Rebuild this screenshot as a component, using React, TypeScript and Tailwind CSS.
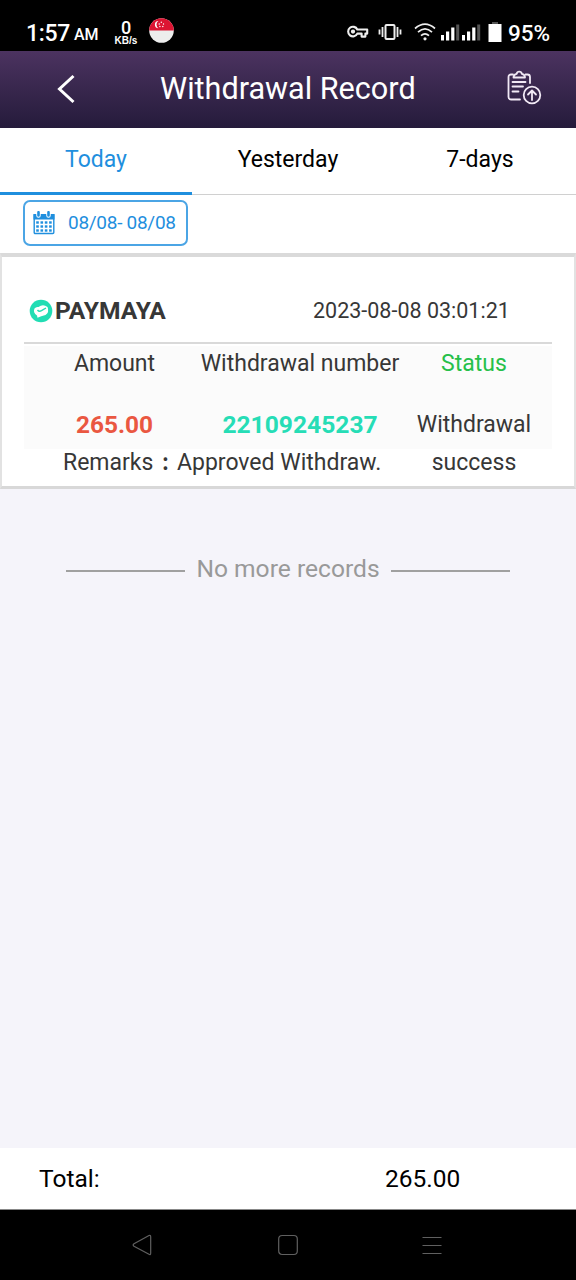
import React from "react";

const tabs = ["Today", "Yesterday", "7-days"];

const KeyIcon = () => (
  <svg width="22" height="14" viewBox="0 0 22 14" fill="none" stroke="#eee" strokeWidth="2.1">
    <path d="M10.3 4.5H20.2V8.6H18.4V11.6H14.6V8.6H10.3A4.8 4.8 0 1 1 10.3 4.5Z" strokeLinejoin="round" />
    <circle cx="6" cy="6.6" r="1.1" />
  </svg>
);

const VibrateIcon = () => (
  <svg width="24" height="16" viewBox="0 0 24 16" fill="none" stroke="#eee">
    <rect x="7.5" y="1" width="9" height="14" rx="1" strokeWidth="2" />
    <path d="M4.5 3v10M19.5 3v10" strokeWidth="1.8" />
    <path d="M1.5 5.5v5M22.5 5.5v5" strokeWidth="1.8" />
  </svg>
);

const WifiIcon = () => (
  <svg width="22" height="18" viewBox="0 0 22 18" fill="none" stroke="#eee" strokeWidth="1.7">
    <path d="M1 5.5Q11-3.2 21 5.5" />
    <path d="M4 9.2Q11 2.6 18 9.2" />
    <path d="M7 12.6Q11 9 15 12.6" />
    <circle cx="11" cy="15.8" r="1.6" fill="#eee" stroke="none" />
  </svg>
);

const SignalIcon = () => (
  <svg width="19" height="17" viewBox="0 0 19 17" fill="#fff">
    <rect x="0" y="11" width="3" height="5.5" />
    <rect x="5" y="7.5" width="3.2" height="9" />
    <rect x="10.2" y="3.5" width="3.2" height="13" />
    <rect x="15.2" y="0.5" width="3" height="16" fill="#555" />
  </svg>
);

const FlagIcon = () => (
  <svg width="25" height="25" viewBox="0 0 25 25">
    <circle cx="12.5" cy="12.5" r="12.3" fill="#ededed" />
    <path d="M.2 12.5a12.3 12.3 0 0 1 24.6 0Z" fill="#dc1432" />
    <path d="M9.5 3a3.6 3.6 0 1 0 0 7.2A4.2 4.2 0 0 1 9.5 3Z" fill="#fff" />
    <g fill="#fff">
      <circle cx="12.3" cy="4.3" r=".7" />
      <circle cx="14.5" cy="6" r=".7" />
      <circle cx="13.8" cy="8.5" r=".7" />
      <circle cx="10.9" cy="8.5" r=".7" />
      <circle cx="10.2" cy="6" r=".7" />
    </g>
  </svg>
);

const ClipboardIcon = () => (
  <svg width="36" height="36" viewBox="0 0 36 36" fill="none" stroke="#f1e9f5" strokeWidth="1.8" strokeLinecap="round" strokeLinejoin="round">
    <path d="M7 5.500H5A2.500 2.500 0 0 0 2.500 8V28A2.500 2.500 0 0 0 5 30.500H14" />
    <path d="M19.500 5.500H21.500A2.500 2.500 0 0 1 24 8V14" />
    <path d="M7.500 8.500Q7.500 5.300 10.700 4.800A2.600 2.600 0 0 1 15.800 4.800Q19 5.300 19 8.500Z" />
    <path d="M6.500 13H19.500M6.500 17.500H17M6.500 22.500H12.500" />
    <circle cx="26" cy="26" r="8.300" />
    <path d="M26 31V21.500M22 25.500L26 21.500L30 25.500" />
  </svg>
);

const CalendarIcon = () => (
  <svg width="22" height="24" viewBox="0 0 22 24">
    <path d="M1.200 4h19.600v17.500a1 1 0 0 1-1 1H2.200a1 1 0 0 1-1-1Z" fill="#fff" stroke="#1f8fde" strokeWidth="1.400" />
    <path d="M.5 3h21v5.500H.5Z" fill="#1f8fde" />
    <path d="M5.500 1v3.500M15.500 1v3.500" stroke="#fff" strokeWidth="4.500" strokeLinecap="round" />
    <path d="M5.500 1.200v3.300M15.500 1.200v3.300" stroke="#1f8fde" strokeWidth="2.600" strokeLinecap="round" />
    <g fill="#1f8fde">
      {[10.3, 14.3, 18.3].map((y) =>
        [3.2, 7.5, 11.8, 16.1].map((x) => (
          <rect key={`${x}-${y}`} x={x} y={y} width="2.6" height="2.4" />
        ))
      )}
    </g>
  </svg>
);

const PaymayaIcon = () => (
  <svg width="24" height="24" viewBox="0 0 24 24">
    <circle cx="12" cy="12" r="11.300" fill="#21ddb4" />
    <path d="M5.500 9.500Q7 7.500 9.500 8Q14 4.500 18.500 8Q20.600 13 16.500 16Q12 17 8.500 18.700L8 16.500Q3.600 13.500 5.500 9.500Z" fill="#fff" />
    <path d="M8.500 11Q10 13 12.500 11.700L17 9" fill="none" stroke="#21ddb4" strokeWidth="1.400" />
  </svg>
);

const StatusBar = () => (
  <div className="flex h-[51px] shrink-0 items-center bg-black pl-[26px] pt-[14px] text-white">
    <span className="w-[45px] pt-[2px] text-[23px] font-medium leading-none tracking-[-0.3px]">1:57</span>
    <span className="mt-[5px] w-[42px] pl-[3px] text-[16px] font-medium leading-none">AM</span>
    <div className="flex w-[26px] flex-col items-center font-medium leading-none">
      <span className="text-[18px] leading-[16px]">0</span>
      <span className="font-['Liberation_Sans',sans-serif] text-[10px] font-bold leading-[10px]">KB/s</span>
    </div>
    <div className="-mt-1 ml-[10px]">
      <FlagIcon />
    </div>
    <div className="-mt-px ml-[173px] flex items-center">
      <KeyIcon />
      <div className="ml-[9px]"><VibrateIcon /></div>
      <div className="ml-[12px]"><WifiIcon /></div>
      <div className="ml-[5px]"><SignalIcon /></div>
      <div className="ml-[2px]"><SignalIcon /></div>
      <svg className="ml-[7px]" width="14" height="20" viewBox="0 0 14 20">
        <rect x="4" y="0" width="6" height="3" fill="#555" />
        <rect x="0.500" y="2" width="13" height="18" fill="#fff" />
      </svg>
    </div>
    <span className="ml-[6px] pt-[2px] text-[22.5px] font-medium leading-none">95%</span>
  </div>
);

const Header = () => (
  <header className="flex h-[77px] shrink-0 items-center bg-linear-to-b from-[#4c3360] to-[#251b3b] pl-[56px] text-white">
    <svg className="-mt-[2px]" width="20" height="30" viewBox="0 0 20 30" fill="none" stroke="#fff" strokeWidth="3">
      <path d="M17.500 2L3.500 15L17.500 28" />
    </svg>
    <h1 className="ml-[84px] w-[258px] whitespace-nowrap pb-px text-[30.6px] leading-none">Withdrawal Record</h1>
    <div className="-mt-[5px] ml-[88px]">
      <ClipboardIcon />
    </div>
  </header>
);

const Record = () => (
  <section className="h-[236px] shrink-0 border-x-2 border-b-[3px] border-t-4 border-x-[#e2e2e2] border-b-[#d8d8d8] border-t-[#dadada] bg-white px-[22px] text-[23px] text-[#373737]">
    <div className="flex h-[87px] items-center border-b-2 border-[#d9d9d9] pl-[5px] pt-[22px]">
      <PaymayaIcon />
      <span className="ml-[2px] w-[258px] pt-[2px] text-[24.6px] font-bold leading-none">PAYMAYA</span>
      <span className="whitespace-nowrap pt-px text-[21.5px] leading-none">2023-08-08 03:01:21</span>
    </div>
    <div className="mt-[2px] grid h-[103px] grid-cols-[181px_190px_158px] bg-[#fbfbfb] text-center leading-[38px]">
      <span className="-mt-px h-[62px] whitespace-nowrap">Amount</span>
      <span className="-mx-3 -mt-px whitespace-nowrap">Withdrawal number</span>
      <span className="-mt-px text-[#26c04a]">Status</span>
      <span className="-mt-px text-[24.4px] font-bold text-[#ea5741]">265.00</span>
      <span className="-mt-px text-[24.6px] font-bold text-[#26ddb6]">22109245237</span>
      <span className="-mt-px">Withdrawal success</span>
    </div>
    <div className="flex h-[26px] items-center whitespace-nowrap pl-[39px] leading-none">
      <span className="w-[91px]">Remarks</span>
      <span className="w-[23px] pb-[3px] text-center font-['Noto_Sans_CJK_SC',sans-serif] font-medium">:</span>
      <span>Approved Withdraw.</span>
    </div>
  </section>
);

const NavBar = () => (
  <nav className="flex h-[71px] shrink-0 items-center justify-between border-t border-[#888] bg-black pl-[132px] pr-[134px]">
    <svg width="20" height="22" viewBox="0 0 20 22" fill="none" stroke="#606060" strokeWidth="1.200">
      <path d="M17 1.500Q18.700.8 18.700 3V19Q18.700 21.200 17 20.300L2 12.200Q.3 11 2 9.800Z" />
    </svg>
    <svg className="ml-[2px]" width="20" height="22" viewBox="0 0 20 22" fill="none" stroke="#606060" strokeWidth="1.200">
      <rect x="0.700" y="1.500" width="18.600" height="19" rx="3.500" />
    </svg>
    <svg width="20" height="22" viewBox="0 0 20 22" fill="none" stroke="#606060" strokeWidth="1.200">
      <path d="M.5 3.500H19.500M.5 11.500H19.500M.5 19.500H19.500" />
    </svg>
  </nav>
);

const App: React.FC = () => {
  return (
    <main className="flex h-[1280px] w-[576px] flex-col overflow-hidden bg-[#f5f4fa] font-['Roboto',sans-serif]">
      <StatusBar />
      <Header />
      <div className="grid h-[67px] shrink-0 grid-cols-3 bg-white text-center text-[23px] leading-[62px]">
        {tabs.map((tab, i) => (
          <button
            key={tab}
            className={i === 0 ? "border-b-3 border-[#1f8fde] pb-px text-[#1f8fde]" : "border-b border-[#d0d0d0] pb-[3px] text-black"}
          >
            {tab}
          </button>
        ))}
      </div>
      <div className="h-[58px] shrink-0 bg-white pl-[23px] pt-[5px]">
        <button className="flex h-[46px] w-[165px] items-center rounded-[7px] border-2 border-[#4ba5e5] pl-[8px] text-[#1f8fde]">
          <CalendarIcon />
          <span className="ml-[13px] whitespace-nowrap pb-[2px] text-[19px] leading-none tracking-[-0.28px]">08/08- 08/08</span>
        </button>
      </div>
      <Record />
      <div className="mt-[63px] flex items-center justify-center whitespace-nowrap text-[24.6px] leading-[32px] text-[#999]">
        <span className="mt-1 h-[2px] w-[119px] bg-[#a0a0a0]" />
        <span className="w-[206px] pt-px text-center">No more records</span>
        <span className="mt-1 h-[2px] w-[119px] bg-[#a0a0a0]" />
      </div>
      <footer className="mt-auto flex h-[61px] shrink-0 items-center bg-white pl-[39px] pt-[2px] text-[24.5px] leading-none text-black">
        <span className="w-[346px]">Total:</span>
        <span>265.00</span>
      </footer>
      <NavBar />
    </main>
  );
};

export default App;
